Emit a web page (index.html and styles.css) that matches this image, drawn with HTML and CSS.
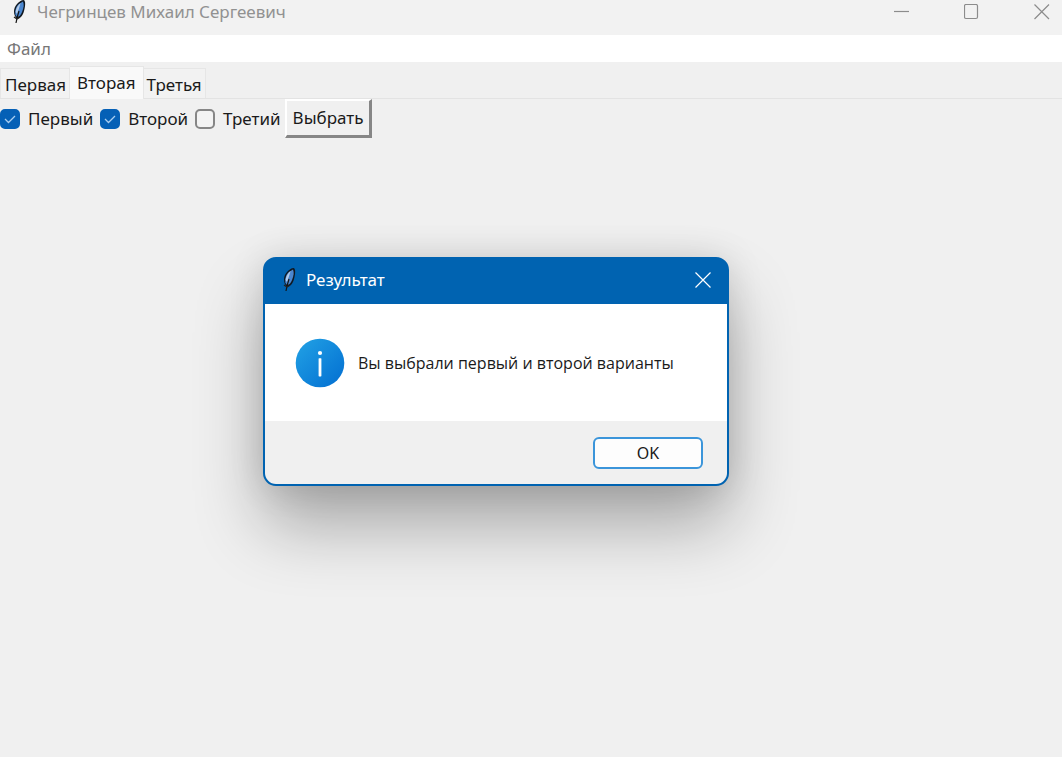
FILE: index.html
```html
<!DOCTYPE html>
<html lang="ru">
<head>
<meta charset="utf-8">
<title>Чегринцев Михаил Сергеевич</title>
<link rel="stylesheet" href="styles.css">
</head>
<body>
<svg class="defs" width="0" height="0" aria-hidden="true">
  <symbol id="feather" viewBox="0 0 14 24">
    <path d="M5 19C1 15 1 8 5 4C7 2 9 0 12 0C14 2 13 7 12 11C11 15 9 18 5 19Z" fill="#101820"/>
    <path d="M3.4 15C2.6 10 4.6 6 7 4L11 1.6C12.4 5 11.4 8 10.4 11C9.4 14 7.4 17 5 17Z" fill="#4a86cf"/>
    <path d="M3.6 12C4.4 7 6.4 5 8.6 3L6.8 9L5 14Z" fill="#b4cbe8"/>
    <path d="M7 11C6 14 5 17 4 23" fill="none" stroke="#151515" stroke-width="1.2"/>
    <path d="M2 17L5 19M8 17L5 19" stroke="#222" stroke-width="1.4"/>
  </symbol>
</svg>
<div class="window">
  <header class="titlebar">
    <svg class="feather" aria-hidden="true"><use href="#feather"/></svg>
    <span class="title">Чегринцев Михаил Сергеевич</span>
    <div class="controls">
      <button type="button" aria-label="Свернуть"><svg width="16" height="16"><path d="M0 7.5H15"/></svg></button>
      <button type="button" aria-label="Развернуть"><svg width="16" height="16"><rect x="0.5" y="0.5" width="13" height="14" rx="1.5"/></svg></button>
      <button type="button" aria-label="Закрыть"><svg width="16" height="16"><path d="M0.5 0.5L15 15M15 0.5L0.5 15"/></svg></button>
    </div>
  </header>
  <nav class="menu"><button type="button">Файл</button></nav>
  <div class="tabs" role="tablist">
    <button type="button" class="tab" role="tab">Первая</button>
    <button type="button" class="tab active" role="tab" aria-selected="true">Вторая</button>
    <button type="button" class="tab" role="tab">Третья</button>
  </div>
  <main class="panel">
    <label class="option"><input type="checkbox" checked>Первый</label>
    <label class="option"><input type="checkbox" checked>Второй</label>
    <label class="option"><input type="checkbox">Третий</label>
    <button type="button" class="choose">Выбрать</button>
  </main>
</div>
<section class="dialog" role="dialog" aria-labelledby="dialog-title">
  <header class="dialog-head">
    <svg class="feather" aria-hidden="true"><use href="#feather"/></svg>
    <span id="dialog-title">Результат</span>
    <button type="button" class="dialog-close" aria-label="Закрыть"><svg width="16" height="16"><path d="M0.5 0.5L15.5 15.5M15.5 0.5L0.5 15.5"/></svg></button>
  </header>
  <div class="dialog-body">
    <svg class="info" viewBox="0 0 50 50" aria-hidden="true">
      <defs><linearGradient id="blue" x1="0" y1="0" x2="1" y2="1"><stop offset="0.1" stop-color="#1f9de3"/><stop offset="0.9" stop-color="#0573d3"/></linearGradient></defs>
      <circle cx="25" cy="25" r="24.3" fill="url(#blue)"/>
      <circle cx="25" cy="15" r="2.1" fill="#fff"/>
      <rect x="23.6" y="20.2" width="2.8" height="18.2" rx="0.6" fill="#fff"/>
    </svg>
    <p>Вы выбрали первый и второй варианты</p>
  </div>
  <footer class="dialog-foot"><button type="button" class="ok">OK</button></footer>
</section>
</body>
</html>
```
FILE: styles.css
```css
* { box-sizing: border-box; }
body {
  margin: 0;
  background: #f0f0f0;
  color: #1a1a1a;
  font: 17px/24px "Noto Sans", "Open Sans", sans-serif;
}
button {
  font: inherit;
  color: inherit;
  border: 0;
  padding: 0;
  background: none;
}
.defs { position: absolute; }
.window { min-height: 100vh; }
.feather { width: 14px; height: 24px; flex: none; }
.titlebar {
  display: flex;
  align-items: center;
  height: 35px;
  padding: 0 12px 12px;
  background: #f2f2f2;
  color: #919191;
}
.title { margin-left: 11px; }
.controls {
  display: flex;
  gap: 54px;
  margin-left: auto;
}
.controls button, .dialog-close { display: flex; }
.controls svg { fill: none; stroke: #8c8c8c; stroke-width: 1.2; }
.menu {
  padding: 2px 7px 1px;
  background: #fff;
  color: #777;
}
.menu button { display: block; }
.tabs {
  display: flex;
  align-items: flex-end;
  height: 37px;
  padding-top: 4px;
  border-bottom: 1px solid #e3e3e3;
}
.tab {
  height: 30px;
  padding: 3px 3px 0 4px;
  line-height: 24px;
  background: #f2f2f2;
  border: 1px solid #e6e6e6;
  border-bottom: 0;
}
.tab + .tab {
  padding-left: 3px;
  border-left: 0;
}
.tab.active {
  height: 33px;
  margin-bottom: -1px;
  padding: 0 7px 1px;
  background: #f9f9f9;
}
.panel { display: flex; align-items: center; }
.option {
  display: flex;
  align-items: center;
  gap: 8px;
  margin-right: 7px;
}
.option input {
  appearance: none;
  width: 20px;
  height: 20px;
  margin: 0;
  border: 2px solid #868686;
  border-radius: 5px;
  background: #f3f3f3;
}
.option input:checked {
  border-color: #0560b6;
  background: #0560b6 url("data:image/svg+xml,%3Csvg xmlns='http://www.w3.org/2000/svg' viewBox='0 0 16 16'%3E%3Cpath d='M3 8l3.5 3.5L13 5' fill='none' stroke='%23a9cdf0' stroke-width='1.3'/%3E%3C/svg%3E") center / 16px no-repeat;
}
.choose {
  height: 39px;
  padding: 0 6px;
  margin-left: -3px;
  border: solid;
  border-width: 2px 3px 3px 2px;
  border-color: #fff #868686 #868686 #fff;
  background: #f0f0f0;
}
.dialog {
  position: absolute;
  left: 263px;
  top: 257px;
  width: 466px;
  border: 2px solid #0063b1;
  border-radius: 13px;
  background: #0063b1;
  box-shadow: 0 40px 68px rgba(0, 0, 0, 0.3), 0 0 36px rgba(0, 0, 0, 0.12);
}
.dialog-head {
  display: flex;
  align-items: center;
  height: 45px;
  padding: 0 16px 3px 17px;
  color: #fff;
}
#dialog-title { margin-left: 10px; }
.dialog-close { margin-left: auto; }
.dialog-close svg { fill: none; stroke: #fff; stroke-width: 1.2; }
.dialog-body {
  display: flex;
  align-items: center;
  gap: 13px;
  height: 117px;
  padding: 0 30px;
  background: #fff;
}
.info { width: 50px; height: 50px; flex: none; }
.dialog-body p { margin: 0; font-family: "Open Sans", "Noto Sans", sans-serif; font-size: 16px; }
.dialog-foot {
  display: flex;
  justify-content: flex-end;
  padding: 16px 24px 15px;
  background: #f0f0f0;
  border-radius: 0 0 11px 11px;
}
.ok {
  width: 110px;
  height: 32px;
  border: 2px solid #3b95da;
  border-radius: 6px;
  background: #fdfdfd;
  font-size: 16px;
}
```
